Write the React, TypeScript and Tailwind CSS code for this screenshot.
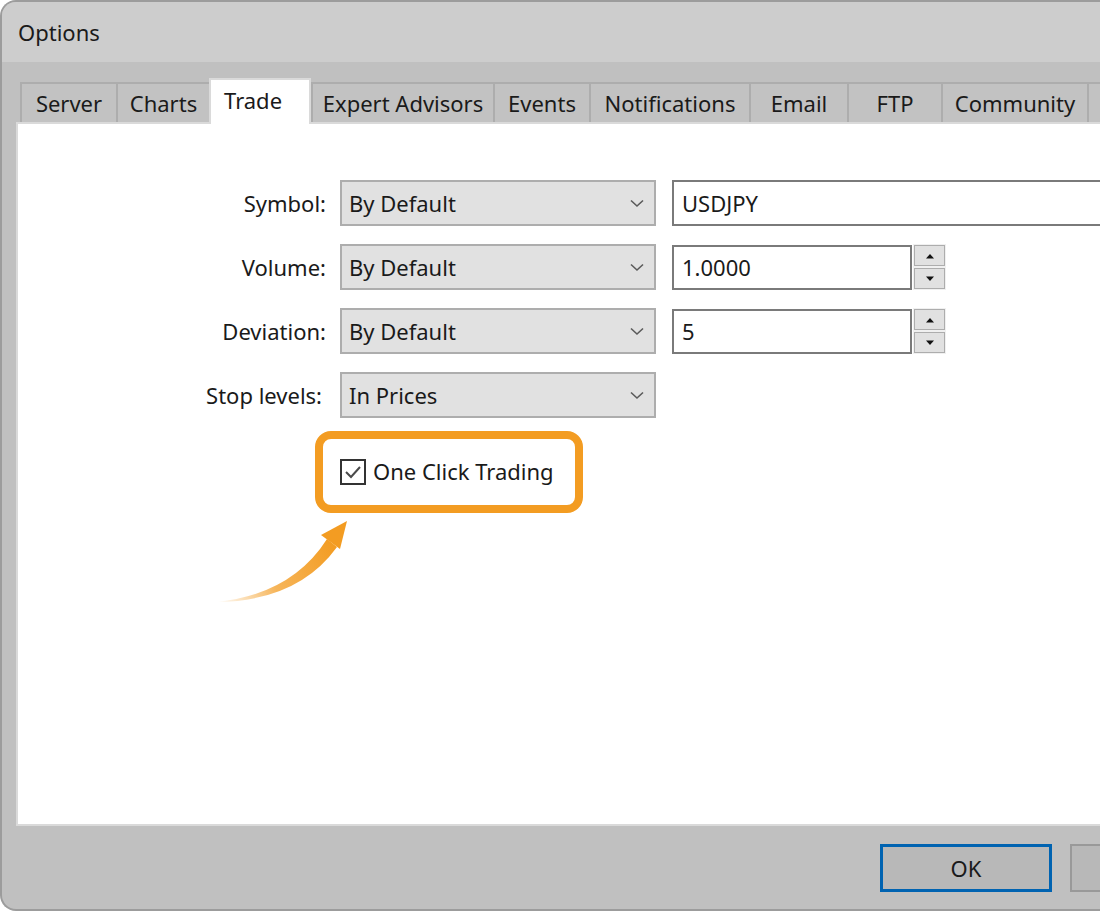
import React from "react";

const tabs = [
  { name: "Server", w: "w-[96px]" },
  { name: "Charts", w: "w-[93px]" },
  { name: "Trade", w: "w-[102px]", active: true },
  { name: "Expert Advisors", w: "w-[182px]" },
  { name: "Events", w: "w-[96px]" },
  { name: "Notifications", w: "w-[160px]" },
  { name: "Email", w: "w-[98px]" },
  { name: "FTP", w: "w-[94px]" },
  { name: "Community", w: "w-[146px]" },
  { name: "", w: "w-[96px]" },
];

function Chevron() {
  return (
    <svg width="16" height="9" viewBox="0 0 16 9">
      <path d="M2 1.5 L8 7 L14 1.5" fill="none" stroke="#5a5a5a" strokeWidth="1.6" />
    </svg>
  );
}

function Select({ value }: { value: string }) {
  return (
    <div className="w-[316px] shrink-0 h-[46px] bg-[#e1e1e1] border-2 border-[#adadad] flex items-center justify-between pl-[7px] pr-[9px]">
      <span>{value}</span>
      <Chevron />
    </div>
  );
}

function Spinner() {
  return (
    <div className="ml-[1px] w-[33px] shrink-0 h-[46px] bg-[#f0f0f0] flex flex-col gap-[2px] py-[1px] px-[1px]">
      <div className="flex-1 bg-[#e1e1e1] border border-[#adadad] flex items-center justify-center">
        <svg width="10" height="6" viewBox="0 0 10 6">
          <path d="M1 5.5 L5 1 L9 5.5 Z" fill="#111" />
        </svg>
      </div>
      <div className="flex-1 bg-[#e1e1e1] border border-[#adadad] flex items-center justify-center">
        <svg width="10" height="6" viewBox="0 0 10 6">
          <path d="M1 0.5 L5 5 L9 0.5 Z" fill="#111" />
        </svg>
      </div>
    </div>
  );
}

function Row({ label, children, labelClass = "pr-[14px]" }: { label: string; children: React.ReactNode; labelClass?: string }) {
  return (
    <div className="flex items-center h-[46px]">
      <div className={"w-[322px] shrink-0 text-right " + labelClass}>{label}</div>
      {children}
    </div>
  );
}

export default function App() {
  return (
    <div className="w-[1100px] h-[912px] overflow-hidden bg-white relative font-['Noto_Sans',sans-serif] text-[22px] text-[#1a1a1a]">
      <div className="w-[1180px] h-[911px] flex flex-col border-2 border-r-0 border-[#9c9c9c] rounded-tl-[16px] rounded-bl-[16px] overflow-hidden bg-[#c0c0c0]">
        <div className="h-[60px] shrink-0 bg-[#cdcdcd] flex items-center pl-[16px] text-[22px]">Options</div>

        <div className="flex-1 flex flex-col pl-[14px] pt-[16px]">
          <div className="h-[44px] flex items-end pl-[4px] relative z-10">
            {tabs.map((t, i) =>
              t.active ? (
                <div
                  key={i}
                  className={t.w + " shrink-0 h-[46px] -mb-[2px] bg-white border-2 border-b-0 border-[#dadada] flex pl-[13px] pt-[4px] leading-[32px]"}
                >
                  {t.name}
                </div>
              ) : (
                <div
                  key={i}
                  className={t.w + " shrink-0 h-[40px] bg-[#c2c2c2] border-t-2 border-l-2 border-[#adadad] flex items-center justify-center"}
                >
                  {t.name}
                </div>
              )
            )}
          </div>

          <div className="h-[704px] shrink-0 bg-white border-2 border-[#dadada] pt-[56px] flex flex-col gap-[18px]">
            <Row label="Symbol:">
              <Select value="By Default" />
              <div className="ml-[16px] w-[520px] shrink-0 h-[46px] border-2 border-[#7a7a7a] flex items-center pl-[8px]">USDJPY</div>
            </Row>
            <Row label="Volume:">
              <Select value="By Default" />
              <div className="ml-[16px] w-[240px] shrink-0 h-[45px] border-2 border-[#7a7a7a] flex items-center pl-[8px]">1.0000</div>
              <Spinner />
            </Row>
            <Row label="Deviation:">
              <Select value="By Default" />
              <div className="ml-[16px] w-[240px] shrink-0 h-[45px] border-2 border-[#7a7a7a] flex items-center pl-[8px]">5</div>
              <Spinner />
            </Row>
            <Row label="Stop levels:" labelClass="pr-[18px]">
              <Select value="In Prices" />
            </Row>

            <div className="flex items-center pl-[322px] mt-[19px]">
              <div className="w-[26px] h-[26px] border-2 border-[#333] flex items-center justify-center">
                <svg width="18" height="14" viewBox="0 0 18 14">
                  <path d="M2 7 L7 12 L16 2" fill="none" stroke="#4a4a4a" strokeWidth="2" />
                </svg>
              </div>
              <span className="ml-[7px]">One Click Trading</span>
            </div>
          </div>

          <div className="flex-1 flex items-start pt-[18px] pl-[864px] gap-[18px]">
            <div className="w-[172px] shrink-0 h-[48px] border-[3px] border-[#0063b1] bg-[#b8b8b8] flex items-center justify-center">OK</div>
            <div className="w-[172px] shrink-0 h-[48px] border-2 border-[#999] bg-[#b8b8b8]"></div>
          </div>
        </div>
      </div>

      <div className="absolute left-[315px] top-[431px] w-[268px] h-[82px] border-[8px] border-[#f39c22] rounded-[16px]"></div>

      <svg className="absolute left-0 top-0 pointer-events-none" width="1100" height="912">
        <defs>
          <linearGradient id="arrowGrad" x1="217" y1="602" x2="335" y2="545" gradientUnits="userSpaceOnUse">
            <stop offset="0" stopColor="#f39c22" stopOpacity="0" />
            <stop offset="0.45" stopColor="#f39c22" stopOpacity="0.75" />
            <stop offset="1" stopColor="#f39c22" stopOpacity="1" />
          </linearGradient>
        </defs>
        <path d="M217 602 Q292 594 327 539 L337 547 Q298 601 217 602 Z" fill="url(#arrowGrad)" />
        <path d="M321 535 L347 521 L340 549 Z" fill="#f39c22" />
      </svg>
    </div>
  );
}
